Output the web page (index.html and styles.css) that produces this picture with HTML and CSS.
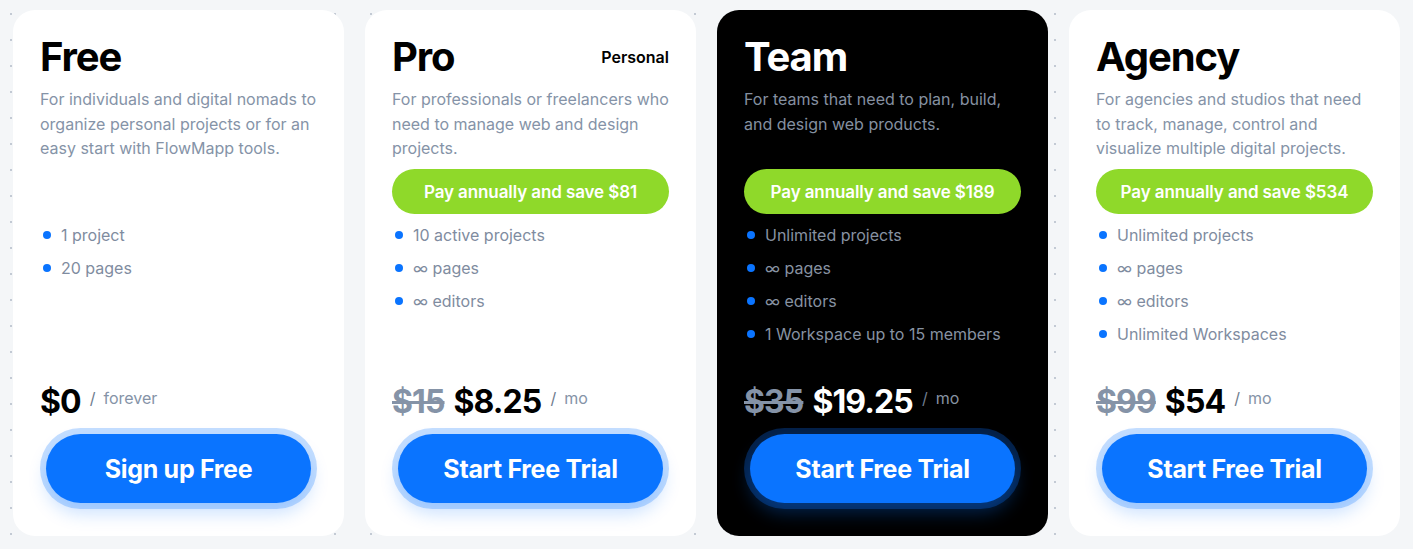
FILE: index.html
```html
<!DOCTYPE html>
<html lang="en">
<head>
<meta charset="utf-8">
<title>Pricing</title>
<link rel="stylesheet" href="styles.css">
</head>
<body>
<main class="plans">
  <section class="card">
    <header class="card-head"><h2 class="title">Free</h2></header>
    <p class="desc">For individuals and digital nomads to organize personal projects or for an easy start with FlowMapp tools.</p>
    <div class="save save-empty" aria-hidden="true"></div>
    <ul class="features">
      <li>1 project</li>
      <li>20 pages</li>
    </ul>
    <div class="price">
      <span class="now">$0</span>
      <span class="per"><span class="slash">/</span>forever</span>
    </div>
    <a class="cta" href="#">Sign up Free</a>
  </section>

  <section class="card">
    <header class="card-head"><h2 class="title">Pro</h2><span class="tag">Personal</span></header>
    <p class="desc">For professionals or freelancers who need to manage web and design projects.</p>
    <div class="save">Pay annually and save $81</div>
    <ul class="features">
      <li>10 active projects</li>
      <li>∞ pages</li>
      <li>∞ editors</li>
    </ul>
    <div class="price">
      <s class="old">$15</s>
      <span class="now">$8.25</span>
      <span class="per"><span class="slash">/</span>mo</span>
    </div>
    <a class="cta" href="#">Start Free Trial</a>
  </section>

  <section class="card card-dark">
    <header class="card-head"><h2 class="title">Team</h2></header>
    <p class="desc">For teams that need to plan, build, and design web products.</p>
    <div class="save">Pay annually and save $189</div>
    <ul class="features">
      <li>Unlimited projects</li>
      <li>∞ pages</li>
      <li>∞ editors</li>
      <li>1 Workspace up to 15 members</li>
    </ul>
    <div class="price">
      <s class="old">$35</s>
      <span class="now">$19.25</span>
      <span class="per"><span class="slash">/</span>mo</span>
    </div>
    <a class="cta" href="#">Start Free Trial</a>
  </section>

  <section class="card">
    <header class="card-head"><h2 class="title">Agency</h2></header>
    <p class="desc">For agencies and studios that need to track, manage, control and visualize multiple digital projects.</p>
    <div class="save">Pay annually and save $534</div>
    <ul class="features">
      <li>Unlimited projects</li>
      <li>∞ pages</li>
      <li>∞ editors</li>
      <li>Unlimited Workspaces</li>
    </ul>
    <div class="price">
      <s class="old">$99</s>
      <span class="now">$54</span>
      <span class="per"><span class="slash">/</span>mo</span>
    </div>
    <a class="cta" href="#">Start Free Trial</a>
  </section>
</main>
</body>
</html>
```

FILE: styles.css
```css
* { box-sizing: border-box; }

html, body {
  margin: 0;
  padding: 0;
}

body {
  width: 1413px;
  height: 549px;
  overflow: hidden;
  font-family: Inter, "Noto Sans", "Liberation Sans", sans-serif;
  background-color: #f4f6f8;
  background-image: radial-gradient(circle, #c3cad4 1px, transparent 1.4px);
  background-size: 36px 26px;
  background-position: -7px 1px;
}

.plans {
  display: grid;
  grid-template-columns: repeat(4, 331px);
  column-gap: 21px;
  padding: 10px 13px 13px 13px;
}

.card {
  height: 526px;
  background: #ffffff;
  border-radius: 22px;
  padding: 23px 27px 27px 27px;
  display: flex;
  flex-direction: column;
  color: #000;
}

.card-dark {
  background: #000000;
  color: #ffffff;
}

.card-head {
  display: flex;
  justify-content: space-between;
  align-items: flex-start;
}

.title {
  margin: 0;
  font-size: 40px;
  line-height: 48px;
  font-weight: 700;
  letter-spacing: -1.1px;
}

.tag {
  font-size: 16px;
  font-weight: 600;
  line-height: 20px;
  margin-top: 14px;
}

.desc {
  margin: 6px 0 0 0;
  font-size: 16px;
  line-height: 24.5px;
  color: #8593a7;
  height: 74px;
}

.card-dark .desc {
  color: #8590a0;
}

.save {
  margin-top: 8px;
  height: 45px;
  border-radius: 23px;
  background: #8fd92a;
  color: #ffffff;
  font-size: 17px;
  font-weight: 600;
  letter-spacing: -0.1px;
  display: flex;
  align-items: center;
  justify-content: center;
}

.save-empty {
  visibility: hidden;
}

.features {
  list-style: none;
  margin: 9px 0 0 0;
  padding: 0 0 0 3px;
  display: flex;
  flex-direction: column;
  gap: 9px;
}

.features li {
  display: flex;
  align-items: center;
  gap: 10px;
  font-size: 16px;
  line-height: 24px;
  color: #7f8ca0;
}

.card-dark .features li {
  color: #8792a2;
}

.features li::before {
  content: "";
  width: 8px;
  height: 8px;
  border-radius: 50%;
  background: #0a74ff;
  flex: none;
}

.price {
  margin-top: auto;
  display: flex;
  align-items: flex-start;
  gap: 9px;
  line-height: 40px;
}

.now, .old {
  font-size: 32px;
  font-weight: 700;
  letter-spacing: -0.9px;
}

.old {
  color: #8593a7;
  text-decoration-thickness: 3px;
  text-decoration-color: #8593a7;
}

.per {
  font-size: 16px;
  line-height: 24px;
  color: #8593a7;
  margin-top: 4px;
  display: flex;
  gap: 8px;
}

.slash {
  color: #6f7c8e;
}

.card-dark .per {
  color: #8792a2;
}

.cta {
  margin: 12px 6px 6px 6px;
  height: 69px;
  border-radius: 35px;
  background: #0a74ff;
  color: #ffffff;
  text-decoration: none;
  font-size: 25px;
  font-weight: 700;
  letter-spacing: -0.3px;
  display: flex;
  align-items: center;
  justify-content: center;
  box-shadow: 0 0 0 6px rgba(10, 116, 255, 0.24), 0 10px 18px rgba(10, 116, 255, 0.22);
}

.card-dark .cta {
  box-shadow: 0 0 0 6px rgba(10, 116, 255, 0.28), 0 10px 18px rgba(10, 116, 255, 0.3);
}
```
